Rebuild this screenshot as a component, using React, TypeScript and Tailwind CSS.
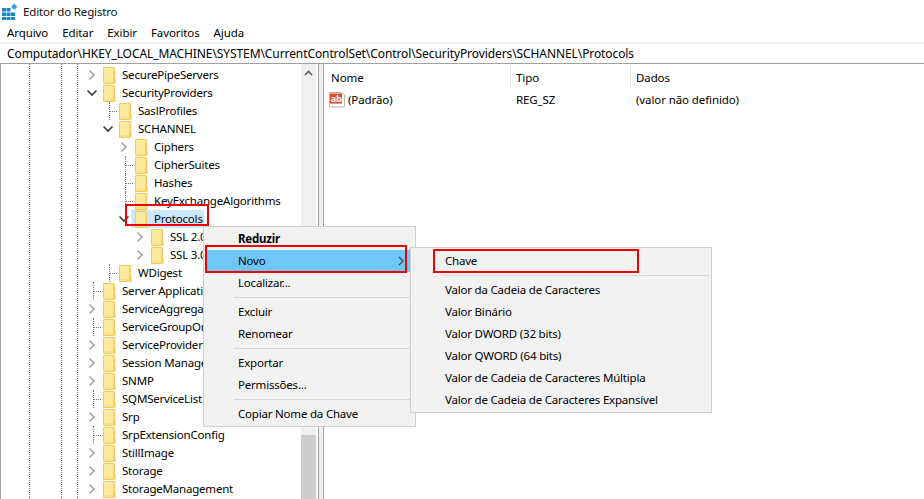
type Row = { name: string; level: number; toggle?: "open" | "closed"; selected?: boolean };

const ROWS: Row[] = [
  { name: "SecurePipeServers", level: 0, toggle: "closed" },
  { name: "SecurityProviders", level: 0, toggle: "open" },
  { name: "SaslProfiles", level: 1 },
  { name: "SCHANNEL", level: 1, toggle: "open" },
  { name: "Ciphers", level: 2, toggle: "closed" },
  { name: "CipherSuites", level: 2 },
  { name: "Hashes", level: 2 },
  { name: "KeyExchangeAlgorithms", level: 2 },
  { name: "Protocols", level: 2, toggle: "open", selected: true },
  { name: "SSL 2.0", level: 3, toggle: "closed" },
  { name: "SSL 3.0", level: 3, toggle: "closed" },
  { name: "WDigest", level: 1 },
  { name: "Server Applications", level: 0 },
  { name: "ServiceAggregatedLogin", level: 0, toggle: "closed" },
  { name: "ServiceGroupOrdering", level: 0 },
  { name: "ServiceProviders", level: 0, toggle: "closed" },
  { name: "Session Manager", level: 0, toggle: "closed" },
  { name: "SNMP", level: 0, toggle: "closed" },
  { name: "SQMServiceList", level: 0 },
  { name: "Srp", level: 0, toggle: "closed" },
  { name: "SrpExtensionConfig", level: 0 },
  { name: "StillImage", level: 0, toggle: "closed" },
  { name: "Storage", level: 0, toggle: "closed" },
  { name: "StorageManagement", level: 0, toggle: "closed" },
];

const INDENT = ["w-0", "w-[16px]", "w-[32px]", "w-[48px]"];

function Folder() {
  return (
    <svg width="13" height="17" viewBox="0 0 13 17" className="shrink-0">
      <path d="M.5.5h11v16H.5z" fill="#fee9a0" stroke="#f3cb5c" />
      <path d="M1.5 15h9V1.5" fill="none" stroke="#f7d774" />
      <path d="M10.5 11.5h2v5h-2z" fill="#f5c94e" />
    </svg>
  );
}

function Chevron({ open }: { open: boolean }) {
  if (open) {
    return (
      <svg width="12" height="8" viewBox="0 0 12 8">
        <path d="M1.5 1.5 6 6l4.500-4.500" fill="none" stroke="#404040" strokeWidth="1.7" />
      </svg>
    );
  }
  return (
    <svg width="8" height="12" viewBox="0 0 8 12">
      <path d="M1.500 1.500 6 6l-4.500 4.500" fill="none" stroke="#a8a8a8" strokeWidth="1.7" />
    </svg>
  );
}

function TreeRow({ row }: { row: Row }) {
  return (
    <div className="flex h-[18px] items-center">
      <div className={`${INDENT[row.level]} shrink-0`} />
      <div className="flex h-[18px] w-[18px] shrink-0 items-center justify-center">
        {row.toggle ? (
          <div className="-ml-[4px]">
            <Chevron open={row.toggle === "open"} />
          </div>
        ) : (
          <div className="flex h-full w-full items-center pl-[8px]">
            <div className="h-full w-0 border-l border-dotted border-l-[#808080]" />
            <div className="w-[7px] border-t border-dotted border-t-[#808080]" />
          </div>
        )}
      </div>
      <div className={`-ml-[4px] flex h-[18px] items-center pl-[4px] pr-[1px] ${row.selected ? "bg-[#cce8ff]" : ""}`}>
        <Folder />
        <span className="ml-[6px] whitespace-nowrap tracking-[-0.2px]">{row.name}</span>
      </div>
    </div>
  );
}

function MenuItem({ label, bold, active, arrow }: { label: string; bold?: boolean; active?: boolean; arrow?: boolean }) {
  return (
    <div className={`flex h-[22px] items-center justify-between pl-[32px] pr-[9px] tracking-[-0.2px] ${active ? "bg-[#6ec6f9]" : ""} ${bold ? "font-bold" : ""}`}>
      <span>{label}</span>
      {arrow && (
        <svg width="6" height="10" viewBox="0 0 6 10">
          <path d="M1 1l4 4-4 4" fill="none" stroke="#444" strokeWidth="1.2" />
        </svg>
      )}
    </div>
  );
}

function Sep() {
  return <div className="my-[3px] ml-[28px] h-px bg-[#d7d7d7]" />;
}

export default function App() {
  return (
    <div className="relative h-[499px] w-[924px] overflow-hidden bg-white font-['Noto_Sans',sans-serif] text-[11.5px] text-black">
      <div className="flex h-[23px] items-center gap-[5px] pl-[2px]">
        <svg width="16" height="17" viewBox="0 0 16 17" className="shrink-0">
          <g fill="#1588c9">
            <rect x="0" y="5" width="4" height="3.500" />
            <rect x="4.500" y="5" width="4" height="3.500" />
            <rect x="0" y="9.500" width="4" height="3.500" />
            <rect x="4.500" y="9.500" width="4" height="3.500" />
            <rect x="9" y="9.500" width="4" height="3.500" />
            <rect x="0" y="14" width="4" height="3" />
            <rect x="4.500" y="14" width="4" height="3" />
            <rect x="9" y="14" width="4" height="3" />
          </g>
          <rect x="10" y="1.500" width="4.500" height="4.500" fill="#35a4de" transform="rotate(45 12.250 3.750)" />
        </svg>
        <span className="tracking-[-0.15px] text-[#111]">Editor do Registro</span>
      </div>
      <div className="flex h-[19px] items-center gap-[14px] pl-[7px] tracking-[-0.1px]">
        {["Arquivo", "Editar", "Exibir", "Favoritos", "Ajuda"].map((m) => (
          <span key={m}>{m}</span>
        ))}
      </div>
      <div className="flex h-[22px] items-center border-t-2 border-b border-t-[#f0f0f0] border-b-[#a0a0a0] pl-[7px] text-[12px] tracking-[-0.09px]">
        Computador\HKEY_LOCAL_MACHINE\SYSTEM\CurrentControlSet\Control\SecurityProviders\SCHANNEL\Protocols
      </div>
      <div className="flex h-[435px]">
        <div className="flex w-[318px] shrink-0 border-l border-l-[#a0a0a0]">
          <div className="flex w-[300px] shrink-0 overflow-hidden">
            <div className="flex w-[84px] shrink-0 pl-[28px]">
              <div className="w-[32px] border-l border-dotted border-l-[#808080]" />
              <div className="w-[16px] border-l border-dotted border-l-[#808080]" />
              <div className="border-l border-dotted border-l-[#808080]" />
            </div>
            <div className="pt-[2px]">
              {ROWS.map((r) => (
                <TreeRow key={r.name} row={r} />
              ))}
            </div>
          </div>
          <div className="flex w-[15px] shrink-0 flex-col bg-[#f0f0f0]">
            <div className="flex h-[17px] items-center justify-center">
              <svg width="9" height="6" viewBox="0 0 9 6">
                <path d="M1 5l3.500-3.500L8 5" fill="none" stroke="#606060" strokeWidth="1.700" />
              </svg>
            </div>
            <div className="flex-1" />
            <div className="h-[64px] bg-[#cdcdcd]" />
          </div>
        </div>
        <div className="w-[6px] shrink-0 border-x border-x-[#a0a0a0] bg-[#f0f0f0]" />
        <div className="flex-1 tracking-[-0.1px]">
          <div className="flex h-[25px] pt-[2px]">
            <div className="flex w-[187px] items-center border-r border-r-[#e5e5e5] pl-[7px]">Nome</div>
            <div className="flex w-[120px] items-center border-r border-r-[#e5e5e5] pl-[5px]">Tipo</div>
            <div className="flex items-center pl-[5px]">Dados</div>
          </div>
          <div className="mt-[2px] flex h-[18px] items-center">
            <svg width="17" height="16" viewBox="0 0 17 16" className="ml-[5px] shrink-0">
              <path d="M.5.500h12l3 2.500v12H.5z" fill="#fff" stroke="#b5b5b5" />
              <rect x="1" y="1.500" width="12" height="10" fill="#ea4a1f" />
              <text x="1.500" y="9.500" fontSize="9.500" fontWeight="700" fill="#fff" fontFamily="Noto Sans">ab</text>
            </svg>
            <span className="ml-[2px] w-[168px]">(Padrão)</span>
            <span className="w-[120px]">REG_SZ</span>
            <span>(valor não definido)</span>
          </div>
        </div>
      </div>

      <div className="absolute left-[203px] top-[226px] w-[213px] border border-[#cfcfcf] bg-[#f2f2f2] px-[2px] py-[1px]">
        <MenuItem label="Reduzir" bold />
        <MenuItem label="Novo" active arrow />
        <MenuItem label="Localizar..." />
        <Sep />
        <MenuItem label="Excluir" />
        <MenuItem label="Renomear" />
        <Sep />
        <MenuItem label="Exportar" />
        <MenuItem label="Permissões..." />
        <Sep />
        <MenuItem label="Copiar Nome da Chave" />
      </div>

      <div className="absolute left-[410px] top-[247px] w-[302px] border border-[#cfcfcf] bg-[#f2f2f2] px-[2px] pb-[1px] pt-[2px]">
        <MenuItem label="Chave" />
        <Sep />
        <MenuItem label="Valor da Cadeia de Caracteres" />
        <MenuItem label="Valor Binário" />
        <MenuItem label="Valor DWORD (32 bits)" />
        <MenuItem label="Valor QWORD (64 bits)" />
        <MenuItem label="Valor de Cadeia de Caracteres Múltipla" />
        <MenuItem label="Valor de Cadeia de Caracteres Expansível" />
      </div>

      <div className="absolute left-[125px] top-[204px] h-[22px] w-[84px] border-2 border-[#ee0000]" />
      <div className="absolute left-[205px] top-[245px] h-[28px] w-[202px] border-2 border-[#ee0000]" />
      <div className="absolute left-[433px] top-[249px] h-[24px] w-[206px] border-2 border-[#ee0000]" />
    </div>
  );
}
